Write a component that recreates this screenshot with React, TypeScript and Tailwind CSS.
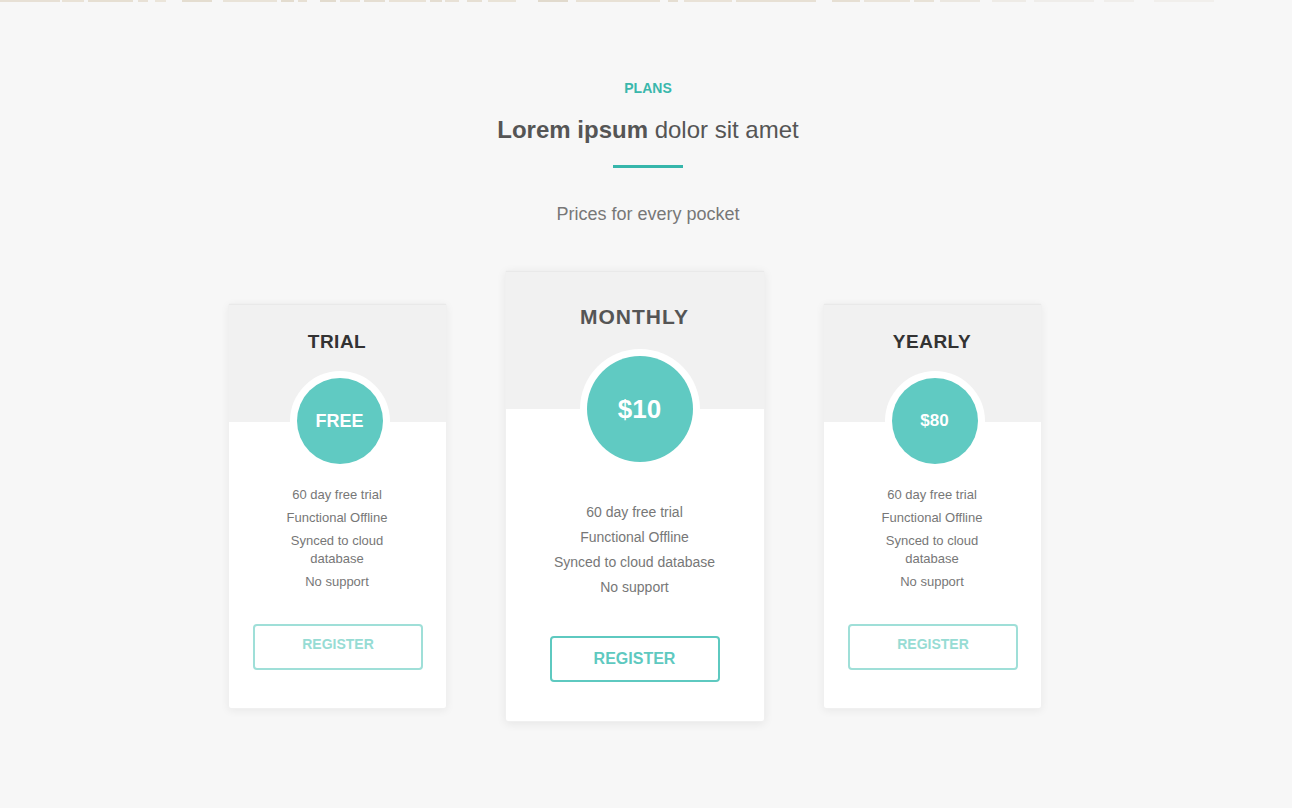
import React from "react";

const strip: [number, string][] = [
  [60, "#e7e0d5"], [2, "#f7f7f7"], [22, "#e9e2d6"], [4, "#f7f7f7"], [45, "#e6dfd2"], [5, "#f7f7f7"],
  [10, "#e8e1d6"], [7, "#f7f7f7"], [11, "#ebe5da"], [16, "#f7f7f7"], [30, "#e4ddd0"], [11, "#f7f7f7"],
  [54, "#e9e3d8"], [4, "#f7f7f7"], [13, "#e3dccf"], [4, "#f7f7f7"], [9, "#e7e0d4"], [13, "#f7f7f7"],
  [16, "#e2dbce"], [4, "#f7f7f7"], [20, "#e8e1d5"], [4, "#f7f7f7"], [21, "#e5ded2"], [4, "#f7f7f7"],
  [37, "#e9e2d6"], [4, "#f7f7f7"], [12, "#e4ddd1"], [3, "#f7f7f7"], [14, "#e8e1d6"], [8, "#f7f7f7"],
  [15, "#e6dfd3"], [6, "#f7f7f7"], [28, "#e9e3d7"], [22, "#f7f7f7"], [30, "#e1dacd"], [8, "#f7f7f7"],
  [84, "#e8e1d5"], [8, "#f7f7f7"], [10, "#e5ded2"], [6, "#f7f7f7"], [48, "#e9e2d7"], [4, "#f7f7f7"],
  [80, "#e7e0d4"], [16, "#f7f7f7"], [28, "#e6dfd3"], [4, "#f7f7f7"], [46, "#eae4da"], [4, "#f7f7f7"],
  [20, "#e8e2d7"], [6, "#f7f7f7"], [40, "#ebe7e0"], [12, "#f7f7f7"], [34, "#eeebe6"], [8, "#f7f7f7"],
  [60, "#efedea"], [10, "#f7f7f7"], [30, "#f0eeeb"], [20, "#f7f7f7"], [60, "#f1efec"],
];

const features = ["60 day free trial", "Functional Offline", "Synced to cloud database", "No support"];

function SideCard({ title, price, priceSize }: { title: string; price: string; priceSize: string }) {
  return (
    <div className="mt-[33px] w-[219px] rounded-[3px] bg-white shadow-[0_2px_8px_rgba(0,0,0,0.06)] border border-[#f0f0f0]">
      <div className="h-[118px] bg-[#f1f1f1] border-t border-[#e9e9e9] pt-[26px] text-center">
        <h3 className="text-[19px] leading-[22px] font-bold tracking-[0.5px] text-[#333]">{title}</h3>
      </div>
      <div className="flex flex-col items-center">
        <div className="-mt-[51px] ml-[5px] w-[100px] h-[100px] rounded-full bg-white p-[7px]">
          <div className={`w-full h-full rounded-full bg-[#60cac2] flex items-center justify-center text-white font-bold ${priceSize}`}>
            {price}
          </div>
        </div>
        <ul className="mt-[15px] flex flex-col gap-[5px] px-[50px] text-center text-[13px] leading-[18px] text-[#777]">
          {features.map((f) => (
            <li key={f}>{f}</li>
          ))}
        </ul>
        <button className="mt-[33px] mb-[38px] ml-[2px] w-[170px] h-[46px] pb-[5px] rounded-[4px] border-2 border-[#9fdfd8] text-[14px] font-bold text-[#97dcd4]">
          REGISTER
        </button>
      </div>
    </div>
  );
}

function MainCard() {
  return (
    <div className="w-[260px] rounded-[3px] bg-white shadow-[0_2px_10px_rgba(0,0,0,0.07)] border border-[#f0f0f0]">
      <div className="h-[138px] bg-[#f1f1f1] border-t border-[#e9e9e9] pt-[33px] text-center">
        <h3 className="text-[21px] leading-[24px] font-bold tracking-[1px] text-[#555]">MONTHLY</h3>
      </div>
      <div className="flex flex-col items-center">
        <div className="-mt-[60px] ml-[10px] w-[120px] h-[120px] rounded-full bg-white p-[7px]">
          <div className="w-full h-full rounded-full bg-[#60cac2] flex items-center justify-center text-white font-bold text-[26px]">
            $10
          </div>
        </div>
        <ul className="mt-[33px] flex flex-col gap-[5px] text-center text-[14px] leading-[20px] text-[#777]">
          {features.map((f) => (
            <li key={f}>{f}</li>
          ))}
        </ul>
        <button className="mt-[39px] mb-[39px] w-[170px] h-[46px] rounded-[4px] border-2 border-[#5ec9c0] text-[16px] font-bold text-[#5ec9c0]">
          REGISTER
        </button>
      </div>
    </div>
  );
}

export default function App() {
  return (
    <div className="min-h-[808px] bg-[#f7f7f7] font-['Liberation_Sans',Arial,sans-serif]">
      <div className="flex h-[2px] overflow-hidden">
        {strip.map(([w, c], i) => (
          <div key={i} className="h-full shrink-0" style={{ width: w, background: c }} />
        ))}
      </div>
      <section className="pt-[78px] pl-[4px] flex flex-col items-center text-center">
        <p className="text-[14px] leading-[16px] font-bold text-[#3ab7ac]">PLANS</p>
        <h2 className="mt-[20px] text-[24px] leading-[28px] text-[#555]">
          <span className="font-bold">Lorem ipsum</span> dolor sit amet
        </h2>
        <div className="mt-[21px] w-[70px] h-[3px] bg-[#36b6ab]" />
        <p className="mt-[35px] text-[18px] leading-[22px] text-[#777]">Prices for every pocket</p>
      </section>
      <div className="mt-[45px] flex items-start justify-center gap-[58px] pr-[23px]">
        <SideCard title="TRIAL" price="FREE" priceSize="text-[18px]" />
        <MainCard />
        <SideCard title="YEARLY" price="$80" priceSize="text-[17px]" />
      </div>
    </div>
  );
}
